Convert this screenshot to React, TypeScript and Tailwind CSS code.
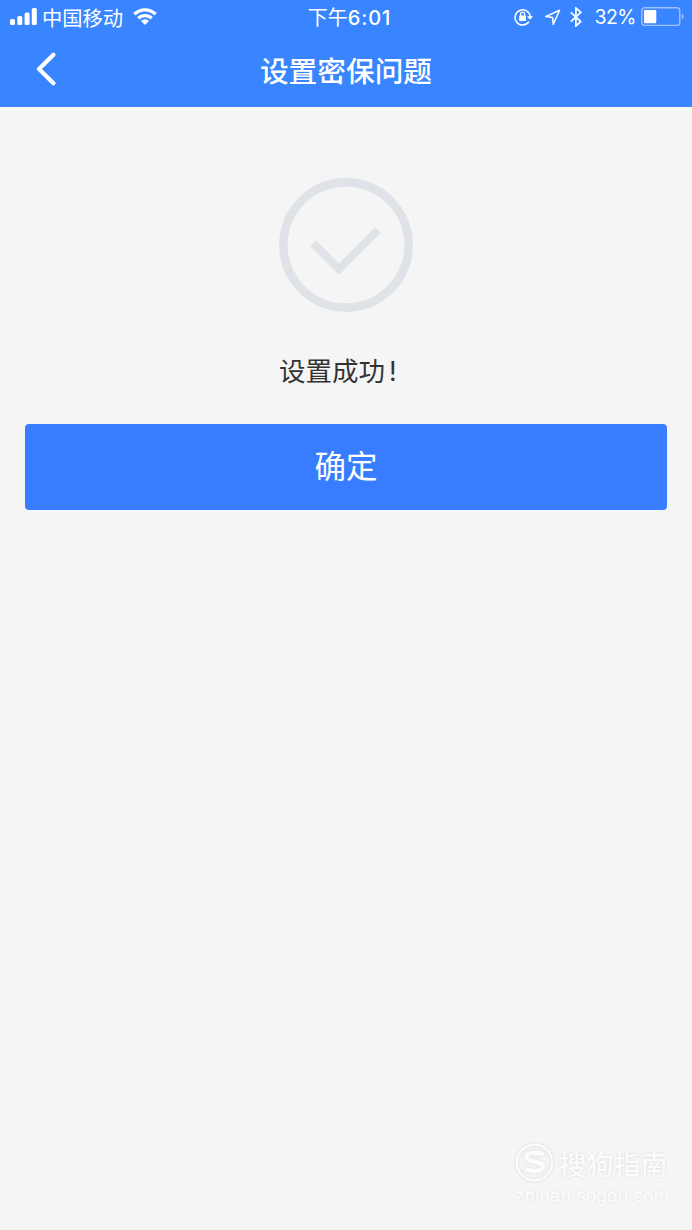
import { ReactNode } from 'react'

function SignalIcon() {
  return (
    <svg width="27" height="17" viewBox="0 0 27 17" fill="currentColor">
      <rect x="0" y="11" width="5" height="6" rx="1.5" />
      <rect x="7.3" y="8" width="5" height="9" rx="1.5" />
      <rect x="14.6" y="4.5" width="5" height="12.5" rx="1.5" />
      <rect x="21.8" y="0" width="5" height="17" rx="1.5" />
    </svg>
  )
}

function WifiIcon() {
  return (
    <svg width="24" height="17" viewBox="0 0 24 17" fill="none">
      <g stroke="currentColor" strokeWidth="3.4">
        <path d="M1.4 6.2a15.2 15.2 0 0 1 21.2 0" />
        <path d="M5.3 10.3a9.6 9.6 0 0 1 13.4 0" />
      </g>
      <path d="M12 17 8 12.9a5.7 5.7 0 0 1 8 0z" fill="currentColor" />
    </svg>
  )
}

function RotationLockIcon() {
  return (
    <svg width="20" height="18" viewBox="0 0 20 18" fill="none">
      <path
        d="M14.9 13.8A7.6 7.6 0 1 1 16.2 8.6"
        stroke="currentColor"
        strokeWidth="1.5"
      />
      <path d="M12.9 8.2h6.2L16 11.8z" fill="currentColor" />
      <rect x="5.2" y="7.6" width="6.8" height="5.4" rx="0.6" fill="currentColor" />
      <path
        d="M6.6 8V6.2a2 2 0 0 1 4 0V8"
        stroke="currentColor"
        strokeWidth="1.3"
      />
    </svg>
  )
}

function LocationIcon() {
  return (
    <svg width="17" height="17" viewBox="0 0 17 17" fill="none">
      <path
        d="M15.6 1.2 1.6 7.6l7 .8.6 7z"
        stroke="currentColor"
        strokeWidth="1.5"
        strokeLinejoin="round"
      />
    </svg>
  )
}

function BluetoothIcon() {
  return (
    <svg width="12" height="20" viewBox="0 0 12 20" fill="none">
      <path
        d="m.8 5.3 10 9.2-4.9 4.5V1l4.9 4.4-10 9.2"
        stroke="currentColor"
        strokeWidth="1.7"
      />
    </svg>
  )
}

function BatteryIcon() {
  return (
    <svg width="44" height="20" viewBox="0 0 44 20" fill="none">
      <rect
        x="0.8"
        y="0.8"
        width="38"
        height="17.6"
        rx="3"
        stroke="currentColor"
        strokeOpacity="0.5"
        strokeWidth="1.4"
      />
      <rect x="3" y="3" width="12.3" height="13.2" rx="1" fill="currentColor" />
      <path d="M40.8 6.6c2.4.8 2.4 5.2 0 6z" fill="currentColor" fillOpacity="0.5" />
    </svg>
  )
}

function StatusBar() {
  return (
    <div className="grid h-[34px] grid-cols-[1fr_224px_1fr] items-center pr-[8px] pl-[10px]">
      <div className="flex items-center">
        <SignalIcon />
        <span className="ml-[5px] text-[20.3px] leading-none">中国移动</span>
        <span className="ml-[10px]">
          <WifiIcon />
        </span>
      </div>
      <div className="pl-[5px] text-center text-[20px] leading-none whitespace-nowrap">
        下午
        <span className="font-['Inter'] text-[20px] font-medium tracking-[0.9px]">
          6:01
        </span>
      </div>
      <div className="flex items-center justify-end">
        <RotationLockIcon />
        <span className="ml-[10px]">
          <LocationIcon />
        </span>
        <span className="ml-[9px]">
          <BluetoothIcon />
        </span>
        <span className="ml-[12px] pt-[2px] font-['Inter'] text-[19.5px] leading-none tracking-[-0.5px]">
          32%
        </span>
        <span className="-mr-px ml-[5px]">
          <BatteryIcon />
        </span>
      </div>
    </div>
  )
}

interface NavBarProps {
  children: ReactNode
}

function NavBar({ children }: NavBarProps) {
  return (
    <div className="grid h-[73px] grid-cols-[80px_1fr_80px] items-center">
      <button className="flex pb-[4px] pl-[36px]" aria-label="返回">
        <svg width="21" height="34" viewBox="0 0 21 34" fill="none">
          <path
            d="M17.4 2.8 3 17l14.4 14.2"
            stroke="currentColor"
            strokeWidth="4.2"
            strokeLinecap="round"
            strokeLinejoin="round"
          />
        </svg>
      </button>
      <h1 className="text-center text-[28.7px] leading-none font-medium">
        {children}
      </h1>
    </div>
  )
}

function SuccessIcon() {
  return (
    <svg width="134" height="134" viewBox="0 0 134 134" fill="none">
      <g stroke="#dfe3e8">
        <circle cx="67" cy="67" r="62.6" strokeWidth="8.6" />
        <path d="m34 65 26 26.3L99 52" strokeWidth="8" />
      </g>
    </svg>
  )
}

function Watermark() {
  return (
    <footer className="mt-auto mr-[23px] mb-[23px] flex w-[154px] flex-col self-end text-[#fcfcfc] [text-shadow:0_0_2px_#d4d4d4]">
      <div className="flex items-center">
        <svg
          className="mt-[2px] drop-shadow-[0_0_1px_#d4d4d4]"
          width="39"
          height="39"
          viewBox="0 0 39 39"
          fill="none"
          stroke="currentColor"
        >
          <circle cx="19.5" cy="19.5" r="17.7" strokeWidth="2.4" />
          <path
            d="M29 11.8c-7-3-17.5-2.5-17.5 2.2 0 5.5 16.5 4 16.5 9.5 0 5.2-11 5.8-18 2.3"
            strokeWidth="4.6"
          />
        </svg>
        <span className="ml-[5px] pt-[5px] text-[27.2px] leading-none font-medium whitespace-nowrap">
          搜狗指南
        </span>
      </div>
      <span className="mt-[3px] font-['Liberation_Sans'] text-[19px] leading-[22px] [-webkit-text-stroke:0.4px_#fcfcfc]">
        zhinan.sogou.com
      </span>
    </footer>
  )
}

export default function App() {
  return (
    <div className="flex min-h-screen flex-col bg-[#f5f5f5] font-['Noto_Sans_CJK_SC',sans-serif]">
      <header className="h-[107px] bg-[#3885ff] text-white">
        <StatusBar />
        <NavBar>设置密保问题</NavBar>
      </header>
      <main className="flex flex-col items-center px-[25px] pt-[71px]">
        <SuccessIcon />
        <p className="mt-[38px] w-[134px] text-[26.5px] leading-[40px] whitespace-nowrap text-[#333]">
          设置成功<span className="ml-[4px] font-['Inter']">!</span>
        </p>
        <button className="mt-[33px] h-[86px] w-full rounded-[4px] bg-[#387dff] pb-[4px] text-[31.5px] leading-none text-white">
          确定
        </button>
      </main>
      <Watermark />
    </div>
  )
}
